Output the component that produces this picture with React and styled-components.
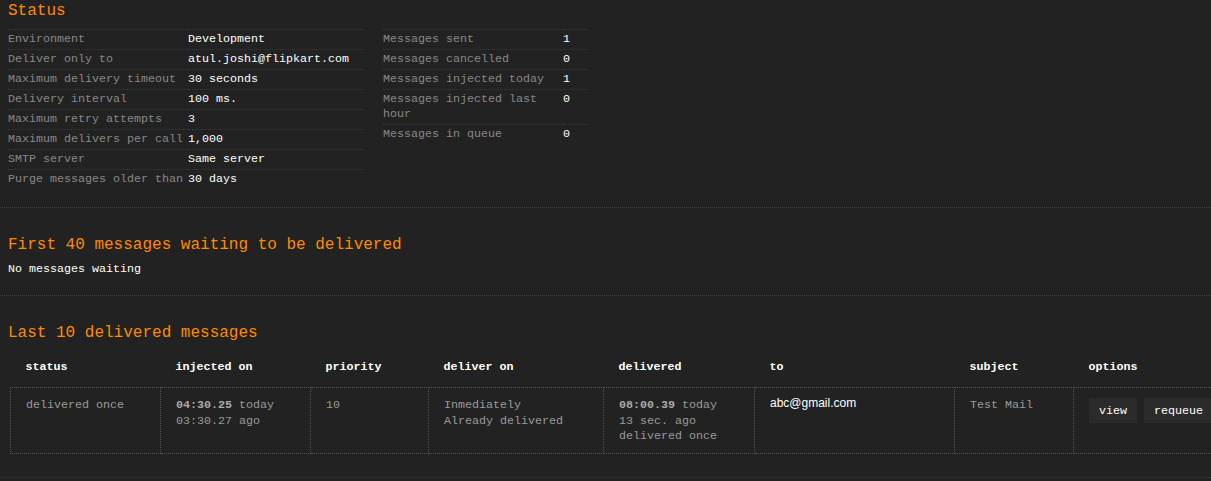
import React from 'react'
import styled, { createGlobalStyle } from 'styled-components'

const GlobalStyle = createGlobalStyle`
  html, body {
    margin: 0;
    padding: 0;
    background: #222;
    overflow: hidden;
  }
  body {
    font-family: "Liberation Mono", "Courier New", monospace;
    font-size: 11.67px;
    color: #fff;
  }
`

const Page = styled.div`
  width: 1211px;
  overflow: hidden;
`

const Section = styled.section`
  padding: ${(p) => p.$top || 0}px 8px ${(p) => p.$bottom || 19}px;
  border-bottom: 1px dotted #3a3a3a;
`

const Title = styled.h2`
  margin: 0 0 ${(p) => p.$gap || 0}px;
  font-size: 16px;
  line-height: 20px;
  font-weight: normal;
  color: #ff8a00;
`

const Columns = styled.div`
  display: flex;
  align-items: flex-start;
  gap: 20px;
`

const InfoTable = styled.div`
  width: ${(p) => p.$width}px;
  display: grid;
  grid-template-columns: 180px 1fr;
`

const InfoRow = styled.div`
  display: contents;
`

const Label = styled.div`
  color: #888;
  line-height: 15px;
  padding: 2px 0;
  border-top: 1px dotted #3a3a3a;
`

const Value = styled(Label)`
  color: #fff;
`

const Note = styled.p`
  margin: 0;
  line-height: 15px;
  color: #fff;
  padding-top: 7px;
`

const MessageTable = styled.table`
  margin: 9px 0 0 2px;
  border-collapse: collapse;
  table-layout: fixed;
  width: 1230px;
`

const Head = styled.th`
  text-align: left;
  font-weight: bold;
  color: #fff;
  line-height: 15px;
  padding: 8px 15px 12px;
  width: ${(p) => p.$w}px;
  box-sizing: border-box;
`

const Cell = styled.td`
  vertical-align: top;
  color: #9a9a9a;
  line-height: 15.5px;
  padding: 10px 15px 8px;
  border: 1px dotted #555;
  white-space: nowrap;
`

const Strong = styled.b`
  color: #aaa;
`

const Mail = styled.span`
  font-family: "Liberation Sans", Arial, sans-serif;
  font-size: 12px;
  color: #fff;
  position: relative;
  top: -2px;
`

const Options = styled.div`
  display: flex;
  gap: 7px;
`

const Button = styled.button`
  font-family: "Liberation Mono", "Courier New", monospace;
  font-size: 11.67px;
  color: #fff;
  background: #2b2b2b;
  border: none;
  height: 25px;
  padding: 0 10px;
  cursor: pointer;
`

const env = [
  ['Environment', 'Development'],
  ['Deliver only to', 'atul.joshi@flipkart.com'],
  ['Maximum delivery timeout', '30 seconds'],
  ['Delivery interval', '100 ms.'],
  ['Maximum retry attempts', '3'],
  ['Maximum delivers per call', '1,000'],
  ['SMTP server', 'Same server'],
  ['Purge messages older than', '30 days'],
]

const stats = [
  ['Messages sent', '1'],
  ['Messages cancelled', '0'],
  ['Messages injected today', '1'],
  ['Messages injected last hour', '0'],
  ['Messages in queue', '0'],
]

const heads = [
  ['status', 150],
  ['injected on', 150],
  ['priority', 118],
  ['deliver on', 175],
  ['delivered', 151],
  ['to', 200],
  ['subject', 119],
  ['options', 167],
]

const App = () => {
  return (
    <Page>
      <GlobalStyle />
      <Section $top={1} $bottom={18}>
        <Title $gap={8}>Status</Title>
        <Columns>
          <InfoTable $width={355}>
            {env.map(([k, v]) => (
              <InfoRow key={k}>
                <Label>{k}</Label>
                <Value>{v}</Value>
              </InfoRow>
            ))}
          </InfoTable>
          <InfoTable $width={204}>
            {stats.map(([k, v]) => (
              <InfoRow key={k}>
                <Label>{k}</Label>
                <Value>{v}</Value>
              </InfoRow>
            ))}
          </InfoTable>
        </Columns>
      </Section>

      <Section $top={27} $bottom={18}>
        <Title>First 40 messages waiting to be delivered</Title>
        <Note>No messages waiting</Note>
      </Section>

      <Section $top={27} $bottom={23}>
        <Title>Last 10 delivered messages</Title>
        <MessageTable>
          <thead>
            <tr>
              {heads.map(([h, w]) => (
                <Head key={h} $w={w}>{h}</Head>
              ))}
            </tr>
          </thead>
          <tbody>
            <tr>
              <Cell>delivered once</Cell>
              <Cell>
                <Strong>04:30.25</Strong> today<br />03:30.27 ago
              </Cell>
              <Cell>10</Cell>
              <Cell>
                Inmediately<br />Already delivered
              </Cell>
              <Cell>
                <Strong>08:00.39</Strong> today<br />13 sec. ago<br />delivered once
              </Cell>
              <Cell>
                <Mail>abc@gmail.com</Mail>
              </Cell>
              <Cell>Test Mail</Cell>
              <Cell>
                <Options>
                  <Button>view</Button>
                  <Button>requeue</Button>
                </Options>
              </Cell>
            </tr>
          </tbody>
        </MessageTable>
      </Section>
    </Page>
  )
}

export default App
